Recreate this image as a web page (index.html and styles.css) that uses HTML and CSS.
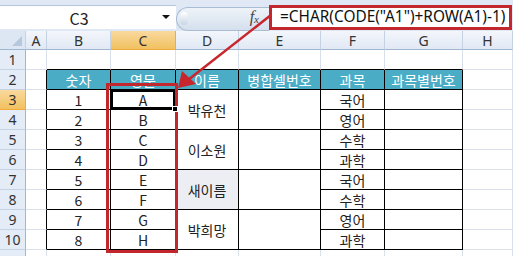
FILE: index.html
```html
<!DOCTYPE html>
<html>
<head>
<meta charset="utf-8">
<title>CHAR CODE ROW</title>
<link rel="stylesheet" href="styles.css">
</head>
<body>
<div class="page">
  <div class="fbar">
    <div class="namebox"><span class="name">C3</span><span class="drop"></span></div>
    <div class="fxzone"><span class="knob"></span><span class="fx">f<sub>x</sub></span></div>
    <div class="formula">=CHAR(CODE("A1")+ROW(A1)-1)</div>
  </div>

  <div class="sheet">
    <div class="ch corner"><span class="tri"></span></div>
    <div class="ch">A</div><div class="ch">B</div><div class="ch sel">C</div><div class="ch">D</div>
    <div class="ch">E</div><div class="ch">F</div><div class="ch">G</div><div class="ch">H</div>

    <div class="rh">1</div><div class="c"></div>
    <div class="c bb"></div><div class="c bb"></div><div class="c bb"></div><div class="c bb"></div><div class="c bb"></div><div class="c bb"></div>
    <div class="c"></div>

    <div class="rh">2</div><div class="c br"></div>
    <div class="c t hd">숫자</div><div class="c t hd">영문</div><div class="c t hd">이름</div>
    <div class="c t hd">병합셀번호</div><div class="c t hd">과목</div><div class="c t hd">과목별번호</div>
    <div class="c"></div>

    <div class="rh sel">3</div><div class="c br"></div>
    <div class="c t">1</div><div class="c t active">A<span class="handle"></span></div>
    <div class="c t m2">박유천</div><div class="c t m2"></div>
    <div class="c t">국어</div><div class="c t"></div><div class="c"></div>

    <div class="rh">4</div><div class="c br"></div>
    <div class="c t">2</div><div class="c t">B</div>
    <div class="c t">영어</div><div class="c t"></div><div class="c"></div>

    <div class="rh">5</div><div class="c br"></div>
    <div class="c t">3</div><div class="c t">C</div>
    <div class="c t m2">이소원</div><div class="c t m2"></div>
    <div class="c t">수학</div><div class="c t"></div><div class="c"></div>

    <div class="rh">6</div><div class="c br"></div>
    <div class="c t">4</div><div class="c t">D</div>
    <div class="c t">과학</div><div class="c t"></div><div class="c"></div>

    <div class="rh">7</div><div class="c br"></div>
    <div class="c t">5</div><div class="c t">E</div>
    <div class="c t m2 grey">새이름</div><div class="c t m2"></div>
    <div class="c t">국어</div><div class="c t"></div><div class="c"></div>

    <div class="rh">8</div><div class="c br"></div>
    <div class="c t">6</div><div class="c t">F</div>
    <div class="c t">수학</div><div class="c t"></div><div class="c"></div>

    <div class="rh">9</div><div class="c br"></div>
    <div class="c t">7</div><div class="c t">G</div>
    <div class="c t m2">박희망</div><div class="c t m2"></div>
    <div class="c t">영어</div><div class="c t"></div><div class="c"></div>

    <div class="rh">10</div><div class="c br"></div>
    <div class="c t">8</div><div class="c t">H</div>
    <div class="c t">과학</div><div class="c t"></div><div class="c"></div>

    <div class="rh"></div><div class="c"></div>
    <div class="c"></div><div class="c"></div><div class="c"></div><div class="c"></div><div class="c"></div><div class="c"></div><div class="c"></div>
  </div>

  <div class="redbox"></div>
  <svg class="arrow" width="513" height="256" viewBox="0 0 513 256">
    <line x1="271" y1="15" x2="188" y2="80" stroke="#c8262c" stroke-width="2.5"/>
    <polygon points="178,88 182,71 196,84" fill="#c8262c"/>
  </svg>
</div>
</body>
</html>
```

FILE: styles.css
```css
body {
    margin: 0;
    background: #fff;
    font-family: "Noto Sans CJK KR", "Noto Sans", sans-serif;
}

.page {
    position: relative;
    width: 513px;
    height: 256px;
    overflow: hidden;
}

/* formula bar */
.fbar {
    display: flex;
    height: 31px;
    background: #dfe8f4;
    box-sizing: border-box;
    padding-top: 5px;
}
.namebox {
    width: 176px;
    height: 23px;
    background: #fff;
    border-top: 1px solid #b6c6da;
    position: relative;
    display: flex;
    align-items: center;
    justify-content: center;
}
.name {
    font-size: 16px;
    color: #222;
    margin-left: -18px;
}
.drop {
    position: absolute;
    right: 6px;
    top: 9px;
    border-left: 4px solid transparent;
    border-right: 4px solid transparent;
    border-top: 4px solid #111;
}
.fxzone {
    width: 92px;
    height: 22px;
    margin-top: 2px;
    background: linear-gradient(#eef3f9, #d5e0ed);
    border: 1px solid #a9bcd3;
    border-right: none;
    border-radius: 12px 0 0 12px;
    position: relative;
}
.knob {
    position: absolute;
    left: 3px;
    top: 4px;
    width: 8px;
    height: 13px;
    border-radius: 6px;
    background: linear-gradient(#ffffff, #c8d5e5);
}
.fx {
    position: absolute;
    right: 10px;
    top: 0;
    font-family: "Liberation Serif", serif;
    font-style: italic;
    font-size: 16px;
    line-height: 18px;
    color: #444;
}
.fx sub {
    font-size: 11px;
    vertical-align: -1px;
}
.formula {
    flex: 1;
    height: 25px;
    box-sizing: border-box;
    border: 3px solid #c1272d;
    background: #fff;
    font-family: "Noto Sans", sans-serif;
    font-size: 15.4px;
    line-height: 18px;
    padding-left: 8px;
    color: #111;
    margin-right: 1px;
    white-space: nowrap;
}

/* sheet grid */
.sheet {
    display: grid;
    grid-template-columns: 26px 21px 64px 65px 63px 82px 64px 78px 50px;
    grid-template-rows: 19px repeat(11, 20px);
}
.ch, .rh {
    background: linear-gradient(#f3f6fb, #e1e9f4);
    border-right: 1px solid #9eb6ce;
    border-bottom: 1px solid #9eb6ce;
    color: #333;
    font-size: 14px;
    display: flex;
    align-items: center;
    justify-content: center;
    font-family: "Noto Sans", sans-serif;
}
.ch {
    border-right-color: #c5d2e3;
}
.rh {
    background: #e4ecf7;
    border-bottom-color: #c5d2e3;
}
.ch.sel, .rh.sel {
    background: linear-gradient(#f9d99f, #f1c15f);
    border-color: #f2a940;
}
.corner {
    position: relative;
    background: #dde7f3;
}
.tri {
    position: absolute;
    right: 3px;
    bottom: 3px;
    border-left: 10px solid transparent;
    border-bottom: 10px solid #b7c8dd;
}
.c {
    border-right: 1px solid #dae0ea;
    border-bottom: 1px solid #dae0ea;
    display: flex;
    align-items: center;
    justify-content: center;
    font-size: 14px;
    color: #222;
    position: relative;
}
.c.bb {
    border-bottom-color: #000;
}
.c.br {
    border-right-color: #000;
}
.c.t {
    border-right-color: #000;
    border-bottom-color: #000;
}
.c.hd {
    background: #4bacc6;
    color: #fff;
}
.m2 {
    grid-row: span 2;
}
.grey {
    background: #eceef4;
}
.active {
    box-shadow: inset 0 0 0 2px #000;
}
.handle {
    position: absolute;
    right: -3px;
    bottom: -3px;
    width: 4px;
    height: 4px;
    background: #000;
    border: 1px solid #fff;
    z-index: 2;
}

/* overlays */
.redbox {
    position: absolute;
    left: 106px;
    top: 83px;
    width: 66px;
    height: 164px;
    border: 3px solid #c1272d;
}
.arrow {
    position: absolute;
    left: 0;
    top: 0;
}
```
